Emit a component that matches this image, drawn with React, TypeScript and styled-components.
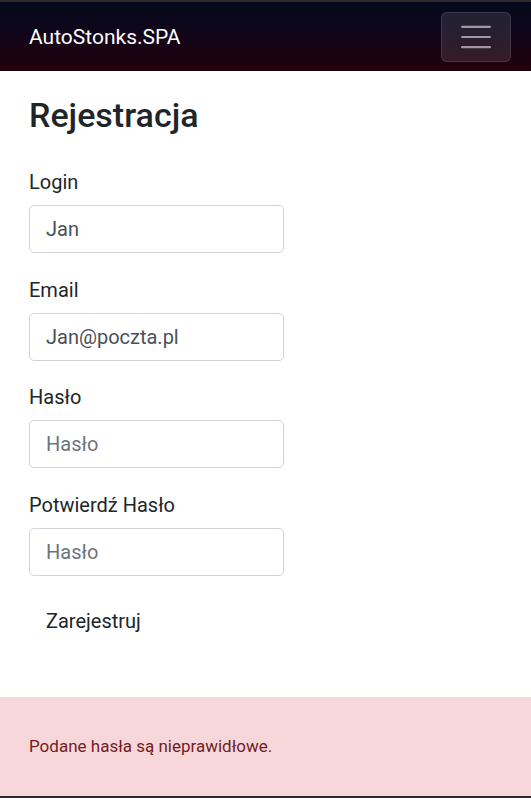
import React, { useState } from 'react';
import styled, { createGlobalStyle } from 'styled-components';

const GlobalStyle = createGlobalStyle`
    html, body {
        margin: 0;
        padding: 0;
        background: #fff;
    }
    body {
        font-family: "Segoe UI", Roboto, "Noto Sans", "Liberation Sans", sans-serif;
        color: #212529;
    }
    * {
        box-sizing: border-box;
    }
`

const Page = styled.div`
    display: flex;
    flex-direction: column;
    height: 100vh;
    border-top: 2px solid #2b2b2b;
    border-bottom: 2px solid #2b2b2b;
    overflow: hidden;
`

const NavBar = styled.nav`
    display: flex;
    align-items: center;
    justify-content: space-between;
    height: 69px;
    padding: 0 20px 0 29px;
    background: linear-gradient(to bottom, #040a1b 0%, #12051a 50%, #230008 100%);
`

const Brand = styled.a`
    color: #fff;
    font-size: 21px;
    line-height: 30px;
    text-decoration: none;
    margin-top: 1px;
`

const Toggler = styled.button`
    display: flex;
    align-items: center;
    justify-content: center;
    width: 70px;
    height: 50px;
    padding: 0;
    background: rgba(255, 255, 255, 0.1);
    border: 1px solid rgba(255, 255, 255, 0.12);
    border-radius: 6px;
    cursor: pointer;
    svg {
        display: block;
    }
`

const Main = styled.main`
    flex: 1;
    padding: 23px 29px 0;
`

const Title = styled.h1`
    margin: 0 0 31px;
    font-size: 34px;
    font-weight: 500;
    line-height: 42px;
`

const Group = styled.div`
    margin-bottom: 21.5px;
`

const Label = styled.label`
    display: block;
    font-size: 20px;
    line-height: 30px;
    margin-bottom: 8px;
`

const Input = styled.input`
    display: block;
    width: 255px;
    height: 48px;
    padding: 8px 16px;
    font-family: inherit;
    font-size: 20px;
    line-height: 30px;
    color: #495057;
    background: #fff;
    border: 1px solid #ced4da;
    border-radius: 5px;
    outline: none;
    &::placeholder {
        color: #6c757d;
    }
`

const SubmitButton = styled.button`
    display: inline-block;
    height: 48px;
    padding: 8px 16px;
    font-family: inherit;
    font-size: 20px;
    line-height: 30px;
    color: #212529;
    background: transparent;
    border: 1px solid transparent;
    border-radius: 5px;
    cursor: pointer;
`

const Alert = styled.div`
    padding: 37px 29px 37px;
    background: #f8d7da;
    color: #721c24;
    font-size: 17px;
    line-height: 25px;
`

const fields = [
    { name: 'login', label: 'Login', type: 'text', placeholder: 'Login', value: 'Jan' },
    { name: 'email', label: 'Email', type: 'email', placeholder: 'Email', value: 'Jan@poczta.pl' },
    { name: 'password', label: 'Hasło', type: 'password', placeholder: 'Hasło', value: '' },
    { name: 'confirm', label: 'Potwierdź Hasło', type: 'password', placeholder: 'Hasło', value: '' },
]

const App = () => {
    const [form, setForm] = useState<Record<string, string>>(
        Object.fromEntries(fields.map(f => [f.name, f.value]))
    );

    return (
        <>
            <GlobalStyle />
            <Page>
                <NavBar>
                    <Brand href="#">AutoStonks.SPA</Brand>
                    <Toggler aria-label="Toggle navigation">
                        <svg width="38" height="38" viewBox="0 0 30 30">
                            <path
                                d="M4 7h22M4 15h22M4 23h22"
                                stroke="rgba(255,255,255,0.55)"
                                strokeWidth="1.7"
                                strokeLinecap="round"
                            />
                        </svg>
                    </Toggler>
                </NavBar>
                <Main>
                    <Title>Rejestracja</Title>
                    <form onSubmit={e => e.preventDefault()}>
                        {fields.map(f => (
                            <Group key={f.name}>
                                <Label htmlFor={f.name}>{f.label}</Label>
                                <Input
                                    id={f.name}
                                    type={f.type === 'password' ? 'text' : f.type}
                                    placeholder={f.placeholder}
                                    value={form[f.name]}
                                    onChange={e => setForm({ ...form, [f.name]: e.target.value })}
                                />
                            </Group>
                        ))}
                        <SubmitButton type="submit">Zarejestruj</SubmitButton>
                    </form>
                </Main>
                <Alert>Podane hasła są nieprawidłowe.</Alert>
            </Page>
        </>
    )
}

export default App;
